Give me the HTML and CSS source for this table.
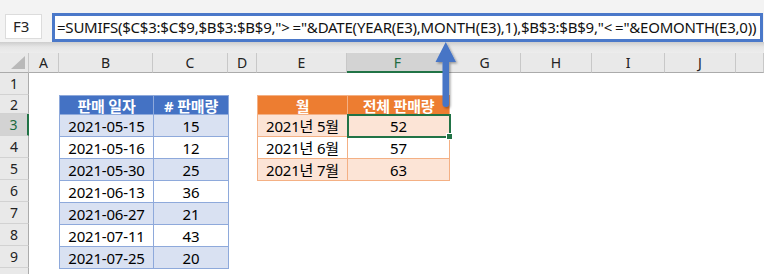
FILE: index.html
```html
<!DOCTYPE html>
<html lang="ko">
<head>
<meta charset="utf-8">
<title>SUMIFS</title>
<link rel="stylesheet" href="styles.css">
</head>
<body>
<div class="fbar">
  <div class="namebox">F3</div>
  <div class="formula">=SUMIFS($C$3:$C$9,$B$3:$B$9,"<span class="op">&gt;</span>="&amp;DATE(YEAR(E3),MONTH(E3),1),$B$3:$B$9,"<span class="op">&lt;</span>="&amp;EOMONTH(E3,0))</div>
</div>
<div class="sheet">
  <div class="corner"><svg width="14" height="13" viewBox="0 0 14 13"><polygon points="14,0 14,13 0,13" fill="#b9b9b9"/></svg></div>
  <div class="ch">A</div>
  <div class="ch">B</div>
  <div class="ch">C</div>
  <div class="ch">D</div>
  <div class="ch">E</div>
  <div class="ch sel">F</div>
  <div class="ch">G</div>
  <div class="ch">H</div>
  <div class="ch">I</div>
  <div class="ch">J</div>
  <div class="ch"></div>

  <div class="rh">1</div>
  <div class="rh">2</div>
  <div class="rh sel">3</div>
  <div class="rh">4</div>
  <div class="rh">5</div>
  <div class="rh">6</div>
  <div class="rh">7</div>
  <div class="rh">8</div>
  <div class="rh">9</div>
  <div class="rh"></div>

  <div class="t1">
    <div class="hd">판매 일자</div><div class="hd"># 판매량</div>
    <div class="band">2021-05-15</div><div class="band">15</div>
    <div>2021-05-16</div><div>12</div>
    <div class="band">2021-05-30</div><div class="band">25</div>
    <div>2021-06-13</div><div>36</div>
    <div class="band">2021-06-27</div><div class="band">21</div>
    <div>2021-07-11</div><div>43</div>
    <div class="band">2021-07-25</div><div class="band">20</div>
  </div>

  <div class="t2">
    <div class="hd">월</div><div class="hd">전체 판매량</div>
    <div class="band">2021년 5월</div><div class="band cur">52</div>
    <div>2021년 6월</div><div>57</div>
    <div class="band">2021년 7월</div><div class="band">63</div>
  </div>
</div>
<svg class="arrow" width="764" height="274" viewBox="0 0 764 274">
  <defs>
    <filter id="sh" x="-50%" y="-20%" width="200%" height="140%">
      <feDropShadow dx="1.5" dy="1.5" stdDeviation="1" flood-color="#000" flood-opacity="0.35"/>
    </filter>
  </defs>
  <path d="M445.75 42 L456 62 L449 62 L449 104 Q449 107 445.75 107 Q442.5 107 442.5 104 L442.5 62 L435.5 62 Z" fill="#4674c6" filter="url(#sh)"/>
</svg>
</body>
</html>
```
FILE: styles.css
```css
html, body {
  margin: 0;
  padding: 0;
}
body {
  width: 764px;
  height: 274px;
  overflow: hidden;
  position: relative;
  background: #ffffff;
  font-family: "Noto Sans", "Noto Sans CJK KR", sans-serif;
  color: #000;
}

/* formula bar */
.fbar {
  height: 53px;
  box-sizing: border-box;
  display: flex;
  align-items: flex-start;
  padding: 13px 1px 0 5px;
  background: linear-gradient(to bottom, #f3f3f3 0, #f3f3f3 42px, #cdcdcd 42px, #e6e6e6 47px, #ededed 53px);
}
.namebox {
  margin-top: 1px;
  width: 37px;
  height: 25px;
  box-sizing: border-box;
  border: 1px solid #dcdcdc;
  background: #fff;
  padding-left: 7px;
  font-size: 15px;
  line-height: 23px;
  color: #222;
}
.formula {
  margin-left: 10px;
  flex: 1;
  height: 29px;
  box-sizing: border-box;
  border: 3px solid #4a78c9;
  background: #fff;
  padding-left: 2px;
  font-size: 15px;
  letter-spacing: -0.22px;
  line-height: 23px;
  white-space: nowrap;
  overflow: hidden;
  color: #111;
}
.formula .op {
  margin-right: 3px;
}

/* grid */
.sheet {
  display: grid;
  grid-template-columns: 29px 30px 94px 75px 29px 90px 102px 72px 71px 73px 71px 1fr;
  grid-template-rows: 20px 22px 19px repeat(8, 22px);
}
.corner {
  background: #e9e9e9;
  border-right: 1px solid #c8c8c8;
  border-bottom: 1px solid #ababab;
  box-sizing: border-box;
  display: flex;
  align-items: flex-end;
  justify-content: flex-end;
  padding: 0 3px 3px 0;
}
.ch {
  background: #e9e9e9;
  border-right: 1px solid #c8c8c8;
  border-bottom: 1px solid #ababab;
  box-sizing: border-box;
  display: flex;
  align-items: center;
  justify-content: center;
  font-size: 14px;
  color: #222;
}
.ch.sel {
  background: #d3d3d3;
  color: #1d6a40;
  border-bottom: 2px solid #217346;
}
.rh {
  grid-column: 1;
  background: #e9e9e9;
  border-right: 1px solid #ababab;
  border-bottom: 1px solid #d2d2d2;
  box-sizing: border-box;
  display: flex;
  align-items: center;
  justify-content: center;
  font-size: 14px;
  color: #222;
}
.rh.sel {
  background: #d3d3d3;
  color: #1d6a40;
  border-right: 2px solid #217346;
}

/* tables */
.t1, .t2 {
  align-self: start;
  justify-self: start;
  display: grid;
  font-size: 15px;
  letter-spacing: -0.2px;
}
.t1 > div, .t2 > div {
  box-sizing: border-box;
  display: flex;
  align-items: center;
  justify-content: center;
  white-space: nowrap;
}
.t1 {
  grid-column: 3 / 5;
  grid-row: 3 / 11;
  grid-template-columns: 94px 75px;
  grid-template-rows: 19px repeat(7, 22px);
  border-left: 1px solid #8ea9db;
  border-top: 1px solid #8ea9db;
}
.t1 > div {
  border-right: 1px solid #8ea9db;
  border-bottom: 1px solid #8ea9db;
}
.t1 .hd {
  background: #4472c4;
  color: #fff;
  font-weight: bold;
}
.t1 .band {
  background: #d9e1f2;
}
.t2 {
  grid-column: 6 / 8;
  grid-row: 3 / 7;
  grid-template-columns: 90px 102px;
  grid-template-rows: 19px repeat(3, 22px);
  border-left: 1px solid #f4b084;
  border-top: 1px solid #f4b084;
}
.t2 > div {
  border-right: 1px solid #f4b084;
  border-bottom: 1px solid #f4b084;
}
.t2 .hd {
  background: #ed7d31;
  color: #fff;
  font-weight: bold;
}
.t2 .band {
  background: #fce4d6;
}
.t2 .cur {
  position: relative;
  outline: 2px solid #217346;
  outline-offset: -1px;
}
.t2 .cur::after {
  content: "";
  position: absolute;
  right: -4px;
  bottom: -4px;
  width: 5px;
  height: 5px;
  background: #217346;
  border: 1px solid #fff;
}

.arrow {
  position: absolute;
  left: 0;
  top: 0;
  pointer-events: none;
}
```
